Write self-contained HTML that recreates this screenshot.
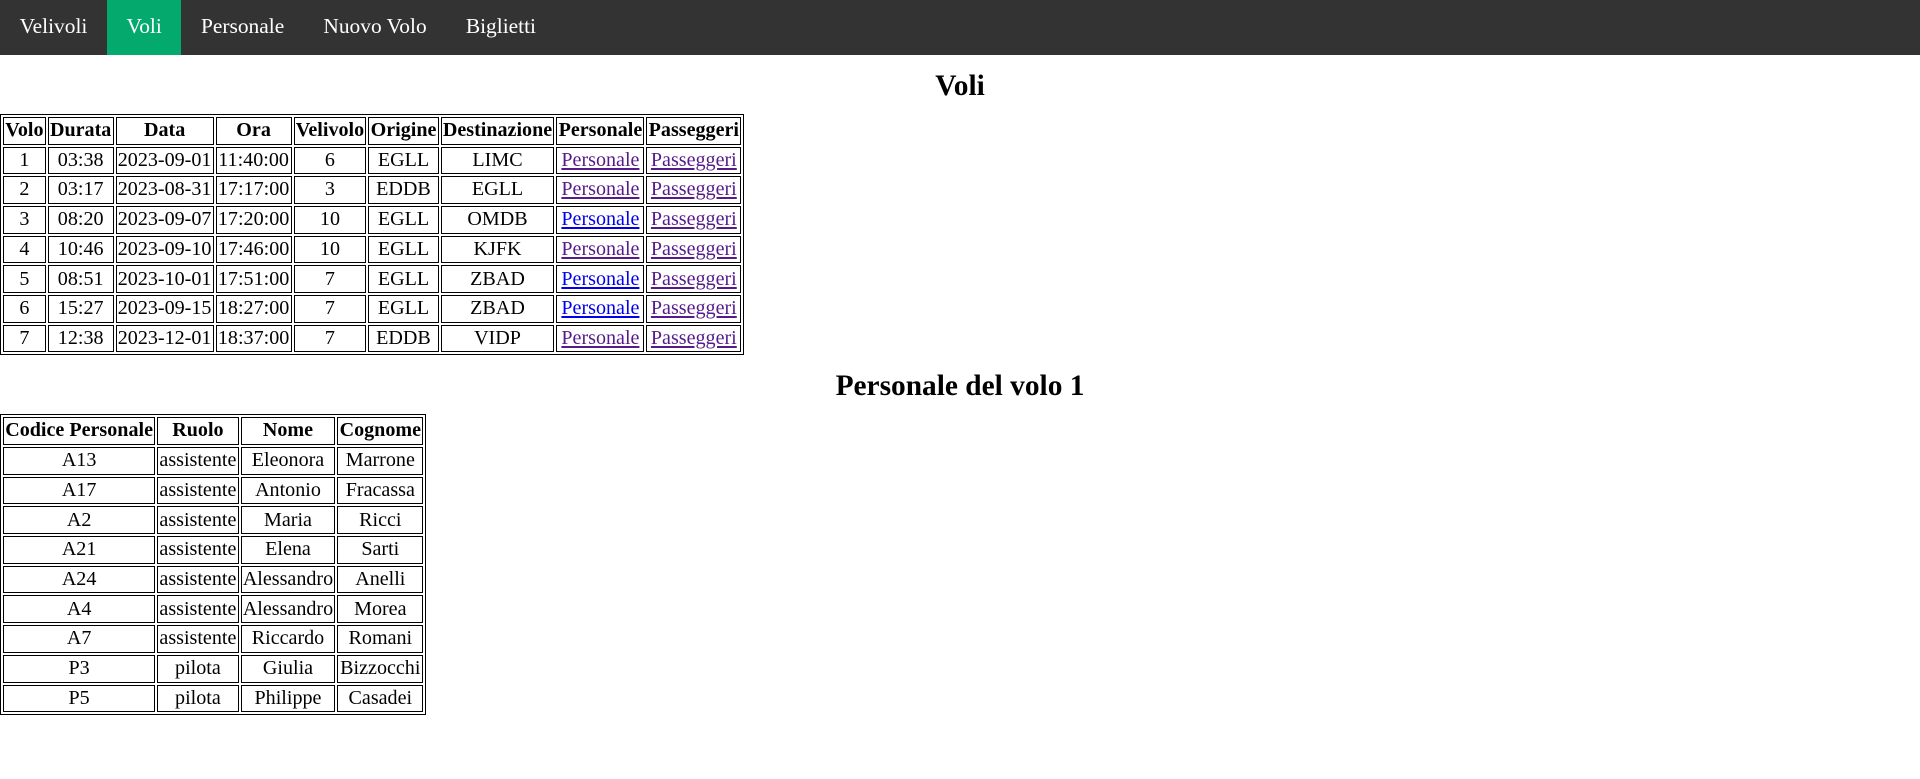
<!DOCTYPE html>
<html><head><meta charset="utf-8"><style>
html{zoom:1.2245}
body{margin:0;font-family:"Liberation Serif",serif;font-size:16px;background:#fff;color:#000}
ul{list-style:none;margin:0;padding:0;background:#333;overflow:hidden;height:45px}
li{float:left}
li a{display:block;color:#fff;text-decoration:none;padding:12px 16px 14px;line-height:19px;font-size:17.5px}
li a.active{background:#04AA6D}
h2{text-align:center;margin:11px 0 9px;font-size:24px;line-height:28px}
table{border:1px solid #000;border-spacing:2px;font-size:16.4px}
td,th{border:1px solid #000;text-align:center;padding:1px;line-height:19px}
a.v{color:#551A8B}a.b{color:#0000EE}
</style></head><body>
<ul><li><a href="#">Velivoli</a></li><li><a class="active" href="#">Voli</a></li><li><a href="#">Personale</a></li><li><a href="#">Nuovo Volo</a></li><li><a href="#">Biglietti</a></li></ul>
<h2>Voli</h2>
<table>
<tr><th>Volo</th><th>Durata</th><th>Data</th><th>Ora</th><th>Velivolo</th><th>Origine</th><th>Destinazione</th><th>Personale</th><th>Passeggeri</th></tr>
<tr><td>1</td><td>03:38</td><td>2023-09-01</td><td>11:40:00</td><td>6</td><td>EGLL</td><td>LIMC</td><td><a class="v" href="#">Personale</a></td><td><a class="v" href="#">Passeggeri</a></td></tr>
<tr><td>2</td><td>03:17</td><td>2023-08-31</td><td>17:17:00</td><td>3</td><td>EDDB</td><td>EGLL</td><td><a class="v" href="#">Personale</a></td><td><a class="v" href="#">Passeggeri</a></td></tr>
<tr><td>3</td><td>08:20</td><td>2023-09-07</td><td>17:20:00</td><td>10</td><td>EGLL</td><td>OMDB</td><td><a class="b" href="#">Personale</a></td><td><a class="v" href="#">Passeggeri</a></td></tr>
<tr><td>4</td><td>10:46</td><td>2023-09-10</td><td>17:46:00</td><td>10</td><td>EGLL</td><td>KJFK</td><td><a class="v" href="#">Personale</a></td><td><a class="v" href="#">Passeggeri</a></td></tr>
<tr><td>5</td><td>08:51</td><td>2023-10-01</td><td>17:51:00</td><td>7</td><td>EGLL</td><td>ZBAD</td><td><a class="b" href="#">Personale</a></td><td><a class="v" href="#">Passeggeri</a></td></tr>
<tr><td>6</td><td>15:27</td><td>2023-09-15</td><td>18:27:00</td><td>7</td><td>EGLL</td><td>ZBAD</td><td><a class="b" href="#">Personale</a></td><td><a class="v" href="#">Passeggeri</a></td></tr>
<tr><td>7</td><td>12:38</td><td>2023-12-01</td><td>18:37:00</td><td>7</td><td>EDDB</td><td>VIDP</td><td><a class="v" href="#">Personale</a></td><td><a class="v" href="#">Passeggeri</a></td></tr>
</table>
<h2>Personale del volo 1</h2>
<table>
<tr><th>Codice Personale</th><th>Ruolo</th><th>Nome</th><th>Cognome</th></tr>
<tr><td>A13</td><td>assistente</td><td>Eleonora</td><td>Marrone</td></tr>
<tr><td>A17</td><td>assistente</td><td>Antonio</td><td>Fracassa</td></tr>
<tr><td>A2</td><td>assistente</td><td>Maria</td><td>Ricci</td></tr>
<tr><td>A21</td><td>assistente</td><td>Elena</td><td>Sarti</td></tr>
<tr><td>A24</td><td>assistente</td><td>Alessandro</td><td>Anelli</td></tr>
<tr><td>A4</td><td>assistente</td><td>Alessandro</td><td>Morea</td></tr>
<tr><td>A7</td><td>assistente</td><td>Riccardo</td><td>Romani</td></tr>
<tr><td>P3</td><td>pilota</td><td>Giulia</td><td>Bizzocchi</td></tr>
<tr><td>P5</td><td>pilota</td><td>Philippe</td><td>Casadei</td></tr>
</table>
</body></html>
